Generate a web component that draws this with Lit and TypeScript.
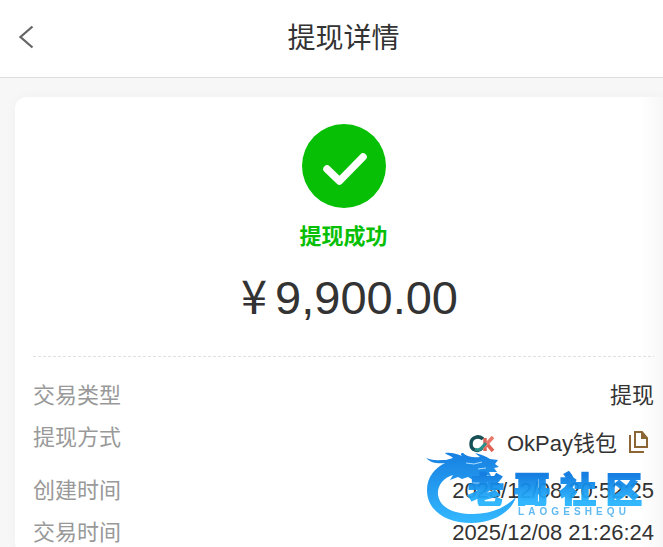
import { LitElement, html, css, svg } from "lit";
import { customElement } from "lit/decorators.js";

@customElement("brand-stamp")
class BrandStamp extends LitElement {
  static styles = css`
    :host {
      display: block;
      width: 226px;
      height: 72px;
      opacity: 0.94;
      pointer-events: none;
    }
    .stamp {
      display: grid;
      grid-template-columns: 40px 186px;
    }
    .dragon {
      grid-area: 1 / 1;
      width: 92px;
      height: 72px;
    }
    .words {
      grid-area: 1 / 2;
      padding-top: 18px;
    }
    .name {
      display: grid;
      grid-template-columns: repeat(4, 46px);
      padding-left: 2px;
      font: 900 36px/36px "Noto Sans CJK SC", sans-serif;
      color: transparent;
      background: linear-gradient(#0878e0 15%, #27b4ff 90%);
      background-clip: text;
      -webkit-background-clip: text;
      -webkit-text-stroke: 2px transparent;
    }
    .latin {
      display: flex;
      justify-content: space-between;
      margin: 0 26px 0 52px;
      font: 700 10px/12px "Liberation Sans", sans-serif;
      color: #58b6f0;
    }
  `;

  render() {
    return html`
      <div class="stamp">
        <svg class="dragon" viewBox="0 0 92 72" aria-hidden="true">
          <defs>
            <linearGradient id="g" x1="0" y1="0" x2="0" y2="1">
              <stop offset="0" stop-color="#0878e0" />
              <stop offset="1" stop-color="#27b4ff" />
            </linearGradient>
          </defs>
          ${svg`<path fill="url(#g)" d="M0 6C7 9 13 8 20 8L27 6C24 3 21 3 19 1C25 0 31 2 36 4C34 2 35 1 37 1C41 5 48 6 54 5L49 1C57 3 61 5 64 7L72 8L69 12L73 15L68 16L71 20L63 20L65 24L57 23L58 27L50 25L47 28L42 25L36 27L32 25L24 28L27 23C17 26 11 34 12 43C14 56 28 62 47 62C65 62 79 56 90 45C85 61 66 71 45 71C19 71 1 58 1 38C1 25 9 16 19 11C12 12 5 11 0 6Z"/>
          <path d="M40 11L48 12L56 10M52 17L60 16" fill="none" stroke="#a8dcff" stroke-width="1"/>`}
        </svg>
        <div class="words">
          <div class="name">${[..."老哥社区"].map((c) => html`<span>${c}</span>`)}</div>
          <div class="latin">${[..."LAOGESHEQU"].map((c) => html`<span>${c}</span>`)}</div>
        </div>
      </div>
    `;
  }
}

@customElement("app-root")
class AppRoot extends LitElement {
  static styles = css`
    :host {
      display: block;
      min-height: 100vh;
      overflow: hidden;
      background: #f7f7f7;
      color: #333;
      font: 22px/42px "Liberation Sans", "Noto Sans CJK SC", sans-serif;
    }
    .page {
      width: calc(100% + 24px);
    }
    header {
      display: grid;
      grid-template-columns: 52px 1fr 52px;
      align-items: center;
      height: 77px;
      background: #fff;
      border-bottom: 1px solid #dedede;
    }
    button {
      display: block;
      padding: 0;
      border: 0;
      background: none;
      cursor: pointer;
    }
    .back {
      padding: 0 0 4px 18px;
    }
    button svg,
    .ok svg {
      display: block;
    }
    h1 {
      margin: 0;
      text-align: center;
      font-size: 28px;
      font-weight: 400;
    }
    .card {
      margin: 19px 15px 0;
      padding: 27px 18px 0;
      border-radius: 12px;
      background: linear-gradient(to left, #f4f4f4, #fff 32px);
      box-shadow: 0 0 12px rgba(0, 0, 0, 0.03);
    }
    .summary {
      display: flex;
      flex-direction: column;
      align-items: center;
    }
    .status {
      margin-top: 13px;
      line-height: 32px;
      font-weight: 700;
      color: #07c005;
    }
    .amount {
      display: flex;
      align-items: baseline;
      gap: 8px;
      height: 92px;
      margin-top: 11px;
      padding-left: 12px;
      font-size: 47px;
      line-height: 60px;
    }
    .currency {
      font-family: "Noto Sans CJK SC", sans-serif;
    }
    .rule {
      height: 1px;
      background: repeating-linear-gradient(to right, #e0e0e0 0 3px, transparent 3px 5px);
    }
    dl {
      margin: 0;
      padding-top: 18px;
    }
    .row {
      display: flex;
      justify-content: space-between;
    }
    dt {
      color: #999;
    }
    dd {
      margin: 0;
      position: relative;
    }
    .method {
      display: flex;
      align-items: center;
      height: 53px;
    }
    .method span {
      margin: 0 12px;
    }
    .copy {
      margin-right: 5px;
      padding-bottom: 4px;
    }
    brand-stamp {
      position: absolute;
      right: 2px;
      top: -18px;
    }
  `;

  render() {
    return html`
      <div class="page">
        <header>
          <button class="back" aria-label="返回">
            <svg width="18" height="24" viewBox="0 0 18 24">
              <path d="M14.500 1.500L2.500 12L14.500 22.500" fill="none" stroke="#666" stroke-width="2.300" />
            </svg>
          </button>
          <h1>提现详情</h1>
        </header>
        <main class="card">
          <section class="summary">
            <div class="ok">
              <svg width="84" height="84" viewBox="0 0 84 84" aria-hidden="true">
                <circle cx="42" cy="42" r="42" fill="#07c005" />
                <path d="M25 45L37.500 57L61 33" fill="none" stroke="#fff" stroke-width="7.500" stroke-linecap="round" stroke-linejoin="round" />
              </svg>
            </div>
            <div class="status">提现成功</div>
            <div class="amount"><span class="currency">¥</span><span>9,900.00</span></div>
          </section>
          <div class="rule"></div>
          <dl>
            <div class="row"><dt>交易类型</dt><dd>提现</dd></div>
            <div class="row">
              <dt>提现方式</dt>
              <dd class="method">
                <svg width="26" height="18" viewBox="0 0 26 18" aria-hidden="true">
                  <path d="M16 3V16M18 9L24 16" fill="none" stroke="#e06456" stroke-width="3.500" />
                  <path d="M15 12L24 2" fill="none" stroke="#e8796a" stroke-width="3.500" />
                  <path d="M14 4C10 0 2 2 2 9C2 16 10 17 13 13" fill="none" stroke="#174f56" stroke-width="3.500" />
                  <path d="M6 14C11 17 13 12 17 8" fill="none" stroke="#28908a" stroke-width="3" />
                </svg>
                <span>OkPay钱包</span>
                <button class="copy" aria-label="复制">
                  <svg width="20" height="24" viewBox="0 0 20 24">
                    <path d="M1 5V22H15M6 2H13L18 8V17H6Z" fill="none" stroke="#8b6534" stroke-width="2" />
                    <path d="M12 1L19 8V9H12Z" fill="#8b6534" />
                  </svg>
                </button>
              </dd>
            </div>
            <div class="row"><dt>创建时间</dt><dd>2025/12/08 20:52:25<brand-stamp></brand-stamp></dd></div>
            <div class="row"><dt>交易时间</dt><dd>2025/12/08 21:26:24</dd></div>
          </dl>
        </main>
      </div>
    `;
  }
}
